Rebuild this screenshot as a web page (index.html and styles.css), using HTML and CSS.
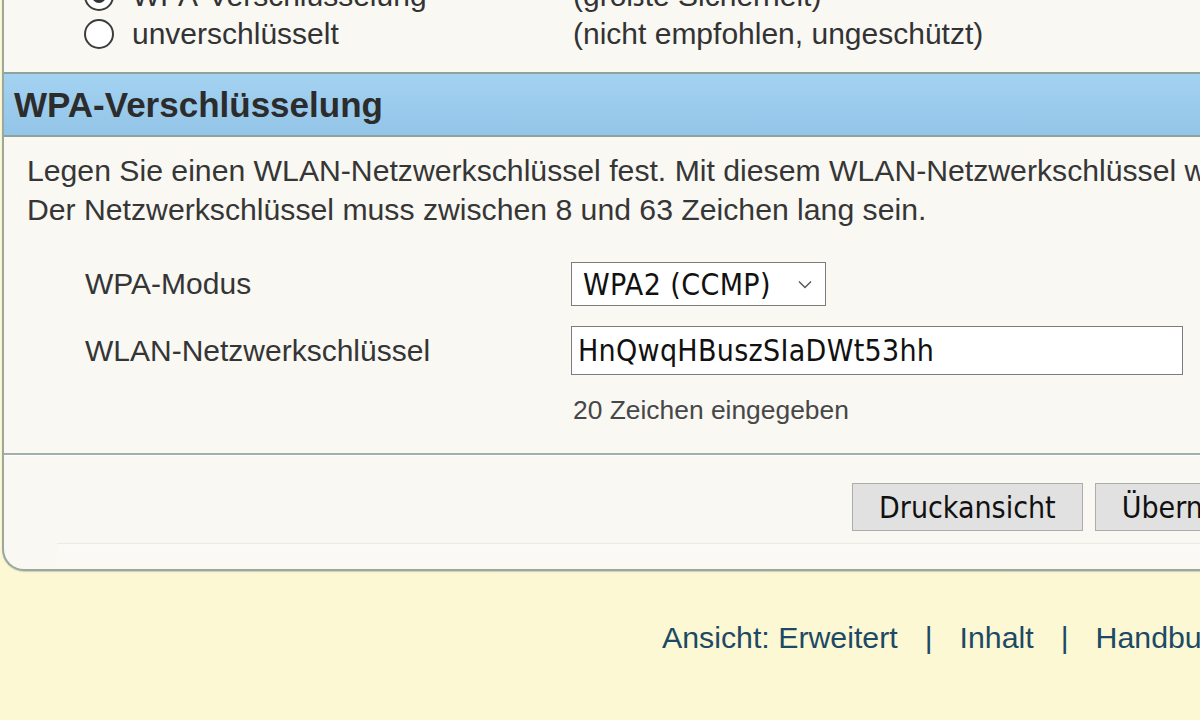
FILE: index.html
```html
<!DOCTYPE html>
<html lang="de">
<head>
<meta charset="utf-8">
<title>WLAN Sicherheit</title>
<link rel="stylesheet" href="styles.css">
</head>
<body>
<div class="page">
  <div class="panel">
    <div class="radios">
      <div class="radio-row">
        <span class="radio checked"><span class="dot"></span></span>
        <span class="radio-label">WPA-Verschlüsselung</span>
        <span class="radio-note">(größte Sicherheit)</span>
      </div>
      <div class="radio-row">
        <span class="radio"></span>
        <span class="radio-label">unverschlüsselt</span>
        <span class="radio-note">(nicht empfohlen, ungeschützt)</span>
      </div>
    </div>

    <h2 class="section-head">WPA-Verschlüsselung</h2>

    <div class="section-body">
      <p class="intro">Legen Sie einen WLAN-Netzwerkschlüssel fest. Mit diesem WLAN-Netzwerkschlüssel werden die Daten verschlüsselt.<br>Der Netzwerkschlüssel muss zwischen 8 und 63 Zeichen lang sein.</p>

      <div class="form">
        <div class="form-row">
          <span class="form-label">WPA-Modus</span>
          <div class="select">
            <span class="select-text">WPA2 (CCMP)</span>
            <svg class="chevron" width="14" height="9" viewBox="0 0 14 9"><path d="M1 1.5 L7 7.5 L13 1.5" fill="none" stroke="#555" stroke-width="1.4"/></svg>
          </div>
        </div>
        <div class="form-row">
          <span class="form-label">WLAN-Netzwerkschlüssel</span>
          <input class="text-input" type="text" value="HnQwqHBuszSIaDWt53hh">
        </div>
        <div class="form-row hint-row">
          <span></span>
          <span class="hint">20 Zeichen eingegeben</span>
        </div>
      </div>
    </div>

    <div class="buttons">
      <button class="btn" type="button">Druckansicht</button>
      <button class="btn" type="button">Übernehmen</button>
      <button class="btn" type="button">Abbrechen</button>
    </div>
    <div class="panel-foot"></div>
  </div>

  <div class="footer">
    <a class="flink" href="#">Ansicht: Erweitert</a>
    <span class="sep">|</span>
    <a class="flink" href="#">Inhalt</a>
    <span class="sep">|</span>
    <a class="flink" href="#">Handbuch</a>
  </div>
</div>
</body>
</html>
```

FILE: styles.css
```css
html, body {
  margin: 0;
  padding: 0;
}
body {
  background: #fcf8d3;
  font-family: "Liberation Sans", Arial, sans-serif;
  color: #353535;
  width: 1200px;
  height: 720px;
  overflow: hidden;
}
.page {
  width: 1600px;
}
.panel {
  margin-top: -23px;
  margin-left: 2px;
  width: 1500px;
  background: #f9f8f3;
  border-left: 2px solid #9aa8a0;
  border-bottom: 2px solid #9aa8a0;
  border-bottom-left-radius: 22px;
  box-shadow: 0 1px 1px rgba(120,130,125,0.35);
}
.radios {
  padding: 0 0 19px 80px;
}
.radio-row {
  display: grid;
  grid-template-columns: 30px 423px auto;
  column-gap: 18px;
  align-items: center;
  height: 38px;
  font-size: 30px;
  color: #333;
}
.radio {
  box-sizing: border-box;
  width: 30px;
  height: 30px;
  border: 2px solid #3c3c3c;
  border-radius: 50%;
  background: #fff;
  display: flex;
  align-items: center;
  justify-content: center;
}
.radio .dot {
  width: 14px;
  height: 14px;
  border-radius: 50%;
  background: #333;
}
.radio-note {
  white-space: nowrap;
}
.section-head {
  margin: 0;
  height: 61px;
  line-height: 61px;
  padding-left: 10px;
  font-size: 35px;
  font-weight: bold;
  color: #2c2c2c;
  background: linear-gradient(#a4d2f1, #93c5e8);
  border-top: 2px solid #8fa39a;
  border-bottom: 2px solid #8fa39a;
}
.section-body {
  padding: 14px 0 28px 23px;
}
.intro {
  margin: 0;
  font-size: 30.2px;
  line-height: 39px;
  white-space: nowrap;
  color: #363636;
}
.form {
  margin-top: 33px;
  display: flex;
  flex-direction: column;
  gap: 20px;
}
.form-row {
  display: grid;
  grid-template-columns: 486px auto;
  align-items: center;
  padding-left: 58px;
}
.form-label {
  font-size: 30px;
  color: #353535;
}
.select {
  box-sizing: border-box;
  width: 255px;
  height: 44px;
  background: #fff;
  border: 1px solid #7c7c7c;
  display: flex;
  align-items: center;
  justify-content: space-between;
  padding: 0 13px 0 11px;
}
.select-text,
.text-input,
.btn {
  font-family: "DejaVu Sans Condensed", "DejaVu Sans", sans-serif;
  font-size: 30px;
  color: #111;
}
.select-text {
  letter-spacing: 0.4px;
}
.chevron {
  display: block;
  margin-top: 1px;
}
.text-input {
  box-sizing: border-box;
  width: 612px;
  height: 49px;
  margin: 0;
  padding: 0 6px;
  border: 1px solid #7c7c7c;
  background: #fff;
  outline: none;
  letter-spacing: 0.3px;
}
.hint {
  font-size: 26.4px;
  line-height: 30px;
  color: #474747;
  padding-left: 2px;
}
.buttons {
  border-top: 2px solid #a3afaa;
  box-shadow: inset 0 1px 0 #ffffff;
  padding: 28px 0 0 848px;
  display: flex;
  gap: 12px;
}
.btn {
  box-sizing: border-box;
  height: 48px;
  padding: 0 26px;
  margin: 0;
  background: #e1e1e1;
  border: 1px solid #adadad;
  border-radius: 0;
}
.panel-foot {
  margin: 12px 0 0 53px;
  height: 25px;
  border-top: 1px solid #eceae3;
  background: linear-gradient(#fbfaf6, #f9f8f3);
}
.footer {
  padding: 49px 0 0 662px;
  display: flex;
  gap: 27px;
  font-size: 30.3px;
  line-height: 36px;
  color: #1c4a66;
}
.flink {
  color: #1c4a66;
  text-decoration: none;
}
.sep {
  color: #1c4a66;
}
```
